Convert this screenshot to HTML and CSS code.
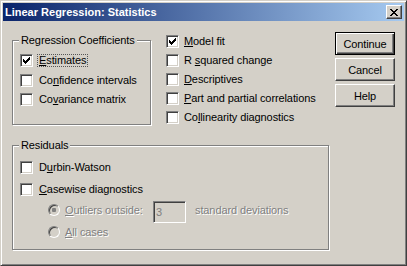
FILE: index.html
```html
<!DOCTYPE html>
<html lang="en">
<head>
    <title>Linear Regression: Statistics</title>
    <meta charset="UTF-8">
    <link rel="stylesheet" href="styles.css">
</head>
<body>

<div class="window">
    <div class="titlebar">
        <span class="title">Linear Regression: Statistics</span>
        <span class="close">
            <svg width="8" height="7" viewBox="0 0 8 7" shape-rendering="crispEdges">
                <rect x="0" y="0" width="2" height="1"/><rect x="6" y="0" width="2" height="1"/>
                <rect x="1" y="1" width="2" height="1"/><rect x="5" y="1" width="2" height="1"/>
                <rect x="2" y="2" width="4" height="1"/>
                <rect x="3" y="3" width="2" height="1"/>
                <rect x="2" y="4" width="4" height="1"/>
                <rect x="1" y="5" width="2" height="1"/><rect x="5" y="5" width="2" height="1"/>
                <rect x="0" y="6" width="2" height="1"/><rect x="6" y="6" width="2" height="1"/>
            </svg>
        </span>
    </div>

    <div class="content">
        <div class="top">
            <div class="group coef">
                <span class="legend">Regression Coefficients</span>
                <div class="check">
                    <span class="box checked"></span>
                    <span class="text focus"><u>E</u>stimates</span>
                </div>
                <div class="check">
                    <span class="box"></span>
                    <span class="text">Co<u>n</u>fidence intervals</span>
                </div>
                <div class="check">
                    <span class="box"></span>
                    <span class="text">Co<u>v</u>ariance matrix</span>
                </div>
            </div>

            <div class="checks">
                <div class="check">
                    <span class="box checked"></span>
                    <span class="text"><u>M</u>odel fit</span>
                </div>
                <div class="check">
                    <span class="box"></span>
                    <span class="text">R <u>s</u>quared change</span>
                </div>
                <div class="check">
                    <span class="box"></span>
                    <span class="text"><u>D</u>escriptives</span>
                </div>
                <div class="check">
                    <span class="box"></span>
                    <span class="text"><u>P</u>art and partial correlations</span>
                </div>
                <div class="check">
                    <span class="box"></span>
                    <span class="text">Co<u>l</u>linearity diagnostics</span>
                </div>
            </div>

            <div class="buttons">
                <div class="btn default">Continue</div>
                <div class="btn">Cancel</div>
                <div class="btn">Help</div>
            </div>
        </div>

        <div class="group residuals">
            <span class="legend">Residuals</span>
            <div class="check tall">
                <span class="box"></span>
                <span class="text">D<u>u</u>rbin-Watson</span>
            </div>
            <div class="check short">
                <span class="box"></span>
                <span class="text"><u>C</u>asewise diagnostics</span>
            </div>
            <div class="option">
                <span class="radio selected"></span>
                <span class="text disabled outliers"><u>O</u>utliers outside:</span>
                <span class="field">3</span>
                <span class="text disabled">standard deviations</span>
            </div>
            <div class="option">
                <span class="radio"></span>
                <span class="text disabled"><u>A</u>ll cases</span>
            </div>
        </div>
    </div>
</div>

</body>
</html>
```

FILE: styles.css
```css
* {
  box-sizing: border-box;
}

body {
  margin: 0;
  font-family: "Liberation Sans", Arial, sans-serif;
  font-size: 11px;
  letter-spacing: -0.1px;
  color: #000;
  background: #D4D0C8;
}

.window {
  width: 407px;
  height: 266px;
  background: #D4D0C8;
  border: 1px solid;
  border-color: #D4D0C8 #404040 #404040 #D4D0C8;
  box-shadow: inset 1px 1px 0 #fff, inset -1px -1px 0 #808080;
  padding: 2px;
}

/* Title bar */
.titlebar {
  height: 18px;
  display: flex;
  align-items: center;
  padding-left: 2px;
  padding-right: 2px;
  background: linear-gradient(to right, #0A246A, #A6CAF0);
}

.title {
  flex: 1;
  color: #fff;
  font-weight: bold;
  letter-spacing: 0;
  line-height: 14px;
}

.close {
  width: 16px;
  height: 14px;
  display: flex;
  align-items: center;
  justify-content: center;
  background: #D4D0C8;
  border: 1px solid;
  border-color: #fff #404040 #404040 #fff;
  box-shadow: inset -1px -1px 0 #808080;
}

.close svg {
  fill: #000;
  margin-top: 1px;
}

/* Content */
.content {
  padding: 11px 9px 0 9px;
}

.top {
  display: flex;
  align-items: flex-start;
}

.group {
  position: relative;
  border: 1px solid #808080;
  box-shadow: 1px 1px 0 #fff, inset 1px 1px 0 #fff;
}

.legend {
  position: absolute;
  top: -7px;
  left: 6px;
  padding: 0 2px;
  line-height: 13px;
  background: #D4D0C8;
}

.coef {
  width: 139px;
  height: 85px;
  margin-top: 8px;
  padding: 13px 0 0 7px;
}

.check {
  display: flex;
  align-items: flex-start;
  height: 19px;
}

.coef .check:first-of-type {
  height: 20px;
}

.box {
  width: 13px;
  height: 13px;
  flex: none;
  background: #fff;
  border: 1px solid;
  border-color: #808080 #fff #fff #808080;
  box-shadow: inset 1px 1px 0 #404040, inset -1px -1px 0 #D4D0C8;
}

.box.checked {
  background: #fff url("data:image/svg+xml,%3Csvg xmlns='http://www.w3.org/2000/svg' width='11' height='11' shape-rendering='crispEdges'%3E%3Cpath d='M2 4h1v3h-1zM3 5h1v3h-1zM4 6h1v3h-1zM5 5h1v3h-1zM6 4h1v3h-1zM7 3h1v3h-1zM8 2h1v3h-1z'/%3E%3C/svg%3E") no-repeat 0 0;
}

.text {
  line-height: 13px;
  margin-left: 6px;
  white-space: nowrap;
}

.text.focus {
  margin-left: 4px;
  padding: 0 1px;
  border: 1px dotted #555;
  line-height: 11px;
}

.checks {
  margin-left: 15px;
  margin-top: 3px;
}

.checks .text {
  margin-left: 5px;
}

/* Buttons */
.buttons {
  margin-left: auto;
  width: 60px;
}

.btn {
  height: 23px;
  margin-bottom: 3px;
  display: flex;
  align-items: center;
  justify-content: center;
  border: 1px solid;
  border-color: #fff #404040 #404040 #fff;
  box-shadow: inset -1px -1px 0 #808080;
}

.btn.default {
  border-color: #000;
  box-shadow: inset 1px 1px 0 #fff, inset -1px -1px 0 #404040, inset -2px -2px 0 #808080;
}

/* Residuals */
.residuals {
  width: 317px;
  height: 105px;
  margin-top: 15px;
  padding: 15px 0 0 7px;
}

.check.tall {
  height: 22px;
}

.check.short {
  height: 18px;
}

.option {
  display: flex;
  align-items: flex-start;
  margin-left: 28px;
  height: 24px;
}

.option + .option {
  height: 14px;
}

.radio {
  width: 12px;
  height: 12px;
  margin-top: 3px;
  flex: none;
  border-radius: 50%;
  background: #D4D0C8;
  border: 1px solid;
  border-color: #808080 #fff #fff #808080;
  box-shadow: inset 1px 1px 0 #404040, inset -1px -1px 0 #D4D0C8;
}

.radio.selected {
  background: radial-gradient(circle, #808080 0 2px, #D4D0C8 2.5px);
}

.option .text {
  margin-left: 5px;
  margin-top: 3px;
  line-height: 12px;
}

.option + .option .radio,
.option + .option .text {
  margin-top: 1px;
}

.disabled {
  color: #808080;
  text-shadow: 1px 1px 0 #fff;
}

.outliers {
  width: 83px;
}

.field {
  width: 33px;
  height: 22px;
  margin-left: 5px;
  padding: 3px 0 0 2px;
  color: #808080;
  line-height: 14px;
  border: 1px solid;
  border-color: #808080 #fff #fff #808080;
  box-shadow: inset 1px 1px 0 #404040, inset -1px -1px 0 #D4D0C8;
}

.field + .text {
  margin-left: 9px;
}
```
